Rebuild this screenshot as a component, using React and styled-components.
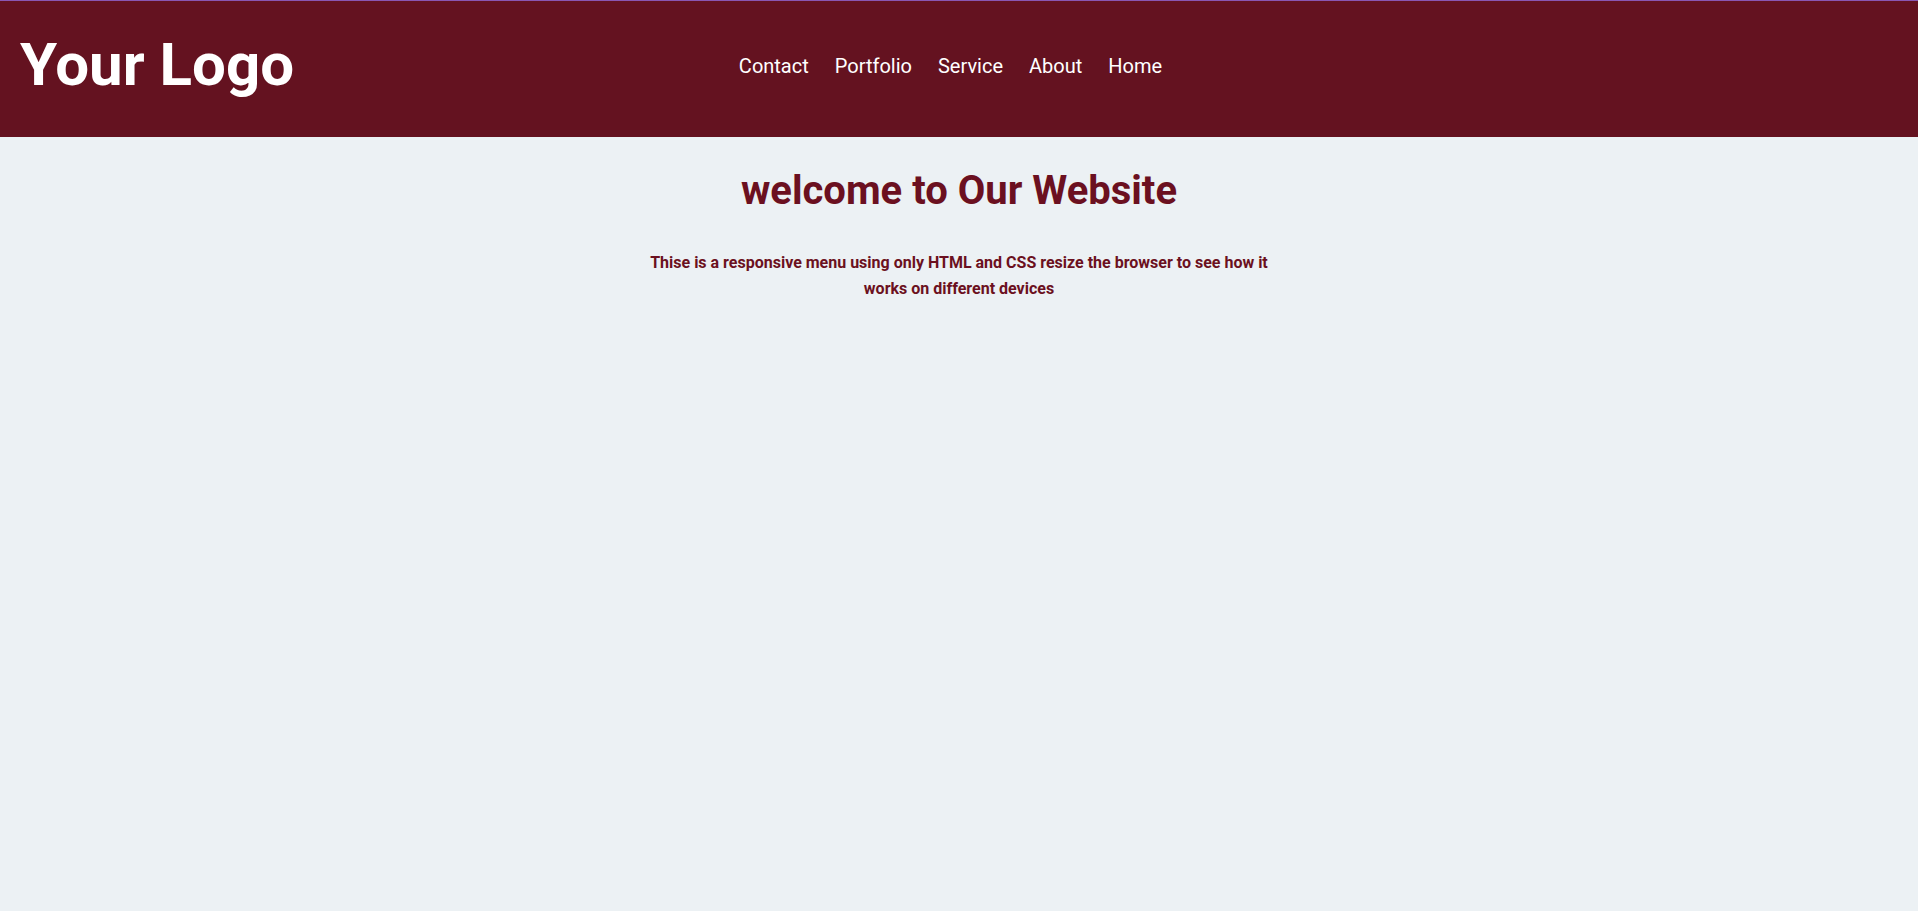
import React from "react";
import styled, { createGlobalStyle } from "styled-components";

const GlobalStyle = createGlobalStyle`
  * {
    box-sizing: border-box;
  }
  body {
    margin: 0;
    background: #ecf1f4;
    font-family: Roboto, "Liberation Sans", sans-serif;
    border-top: 1px solid #8a57b3;
  }
`;

const links = ["Contact", "Portfolio", "Service", "About", "Home"];

export default function App() {
  return (
    <>
      <GlobalStyle />
      <Header>
        <Logo>Your Logo</Logo>
        <Nav>
          {links.map((l) => (
            <NavLink key={l} href="#">
              {l}
            </NavLink>
          ))}
        </Nav>
      </Header>
      <Main>
        <Title>welcome to Our Website</Title>
        <Text>
          Thise is a responsive menu using only HTML and CSS resize the browser
          to see how it works on different devices
        </Text>
      </Main>
    </>
  );
}

const Header = styled.header`
  height: 136px;
  background: #641220;
  display: grid;
  grid-template-columns: 1fr auto 1fr;
  align-items: center;
  padding: 0 20px;
`;

const Logo = styled.h1`
  margin: 0 0 8px;
  color: #fff;
  font-size: 60px;
  font-weight: 700;
  line-height: 1.2;
`;

const Nav = styled.nav`
  display: flex;
  margin-right: 17px;
  margin-bottom: 6px;
`;

const NavLink = styled.a`
  color: #fff;
  text-decoration: none;
  font-size: 20px;
  padding: 0 13px;
`;

const Main = styled.main`
  display: flex;
  flex-direction: column;
  align-items: center;
  text-align: center;
`;

const Title = styled.h2`
  margin: 30px 0 0;
  color: #6b1020;
  font-size: 40px;
  font-weight: 700;
`;

const Text = styled.p`
  margin: 36px 0 0;
  max-width: 640px;
  color: #6b1020;
  font-size: 16px;
  font-weight: 700;
  line-height: 1.6;
`;
